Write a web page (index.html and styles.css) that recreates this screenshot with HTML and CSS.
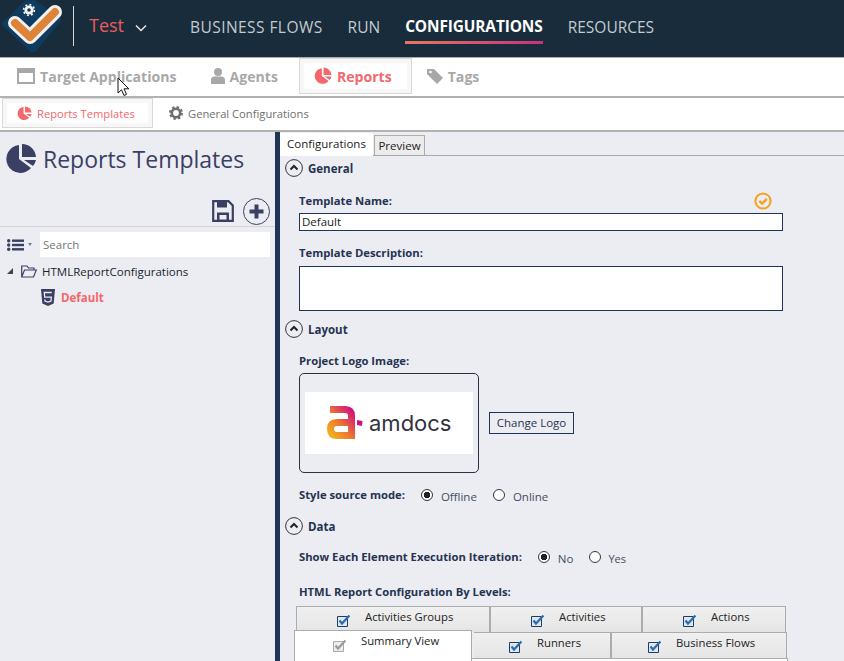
FILE: index.html
```html
<!DOCTYPE html>
<html>
<head lang="en">
	<meta charset="UTF-8">
	<title>Reports Templates</title>
	<link rel="stylesheet" href="styles.css">
</head>
<body>

<header class="topbar">
	<svg class="logo" viewBox="0 0 60 52">
		<path d="M1 24 L28 -2 L58 20 L31 52 Z" fill="#0f3c5e" stroke="#0f3c5e" stroke-width="3" stroke-linejoin="round"/>
		<path d="M13 23 L28 37 L53 12" fill="none" stroke="#f1f1f1" stroke-width="14" stroke-linecap="round" stroke-linejoin="round"/>
		<path d="M13 23 L28 37 L53 12" fill="none" stroke="#de8439" stroke-width="8" stroke-linecap="round" stroke-linejoin="round"/>
		<circle cx="27" cy="10" r="4.600" fill="#f4f4f4"/>
		<circle cx="27" cy="10" r="5.400" fill="none" stroke="#f4f4f4" stroke-width="1.600" stroke-dasharray="2 2.200"/>
		<circle cx="27" cy="10" r="1.800" fill="#0f3c5e"/>
	</svg>
	<div class="sep"></div>
	<div class="solution">Test</div>
	<svg class="chevron" viewBox="0 0 12 8"><path d="M1 1.500 L6 6.500 L11 1.500" fill="none" stroke="#e8e8e8" stroke-width="1.500"/></svg>
	<nav class="nav">
		<a class="wide">BUSINESS FLOWS</a>
		<a>RUN</a>
		<a class="on">CONFIGURATIONS</a>
		<a>RESOURCES</a>
	</nav>
</header>

<div class="tabs1">
	<div class="t1 t-apps">
		<svg class="i18" viewBox="0 0 18 16"><path d="M1 1 H17 V15 H1 Z" fill="none" stroke="#a8a8a8" stroke-width="2"/><path d="M1 1 H17 V5 H1 Z" fill="#a8a8a8"/></svg>
		Target Applications
	</div>
	<div class="t1 t-agents">
		<svg class="i14" viewBox="0 0 14 16"><circle cx="7" cy="4" r="4" fill="#a8a8a8"/><path d="M0 16 V12 Q0 8.500 4 8.500 H10 Q14 8.500 14 12 V16 Z" fill="#a8a8a8"/></svg>
		Agents
	</div>
	<div class="t1 t-reports">
		<svg class="i18" viewBox="0 0 32 32"><g fill="#f4676c"><path d="M14 2 A14 14 0 1 0 26 25 L14 16 Z"/><path d="M17 1 A14 14 0 0 1 31 14 L17 14 Z"/><path d="M19 17 L31 17 A14 14 0 0 1 28 23 Z"/></g></svg>
		Reports
	</div>
	<div class="t1 t-tags">
		<svg class="i16" viewBox="0 0 16 16"><path d="M0 1 H7 L16 10 L10 16 L0 6 Z" fill="#a8a8a8"/><circle cx="3.500" cy="4" r="1.300" fill="#fff"/></svg>
		Tags
	</div>
</div>

<div class="tabs2">
	<div class="t2 t2-on">
		<svg class="i15" viewBox="0 0 32 32"><g fill="#f4676c"><path d="M14 2 A14 14 0 1 0 26 25 L14 16 Z"/><path d="M17 1 A14 14 0 0 1 31 14 L17 14 Z"/><path d="M19 17 L31 17 A14 14 0 0 1 28 23 Z"/></g></svg>
		Reports Templates
	</div>
	<div class="t2 t2-off">
		<svg class="i13" viewBox="0 0 14 14"><circle cx="7" cy="7" r="4.200" fill="none" stroke="#6f6f6f" stroke-width="2.600"/><circle cx="7" cy="7" r="6" fill="none" stroke="#6f6f6f" stroke-width="2" stroke-dasharray="2.400 2.300"/></svg>
		General Configurations
	</div>
</div>

<div class="body">
	<aside class="side">
		<div class="side-title">
			<svg class="title-icon" viewBox="0 0 32 32"><g fill="#3b3f64"><path d="M14 2 A14 14 0 1 0 26 25 L14 16 Z"/><path d="M17 1 A14 14 0 0 1 31 14 L17 14 Z"/><path d="M19 17 L31 17 A14 14 0 0 1 28 23 Z"/></g></svg>
			<span>Reports Templates</span>
		</div>
		<div class="side-tools">
			<svg class="save" viewBox="0 0 22 22"><path d="M1.200 1.200 H16.500 L20.800 5.500 V20.800 H1.200 Z" fill="none" stroke="#3b3f64" stroke-width="2.200"/><path d="M5 1 H15 V7.500 H5 Z M5 12.500 H17 V21 H5 Z" fill="#3b3f64"/><path d="M7.500 15 H14.500 V19.500 H7.500 Z" fill="#ecedf3"/></svg>
			<svg class="plus" viewBox="0 0 27 27"><circle cx="13.500" cy="13.500" r="13" fill="none" stroke="#3b3f64" stroke-width="1"/><path d="M13.500 6.500 V20.500 M6.500 13.500 H20.500" stroke="#3b3f64" stroke-width="4"/></svg>
		</div>
		<div class="side-search">
			<svg class="list-icon" viewBox="0 0 17 12"><g fill="#3b3f64"><circle cx="1.700" cy="1.700" r="1.700"/><circle cx="1.700" cy="6" r="1.700"/><circle cx="1.700" cy="10.300" r="1.700"/><rect x="5" y="0.500" width="12" height="2.400"/><rect x="5" y="4.800" width="12" height="2.400"/><rect x="5" y="9.100" width="12" height="2.400"/></g></svg>
			<span class="caret"></span>
			<div class="search">Search</div>
		</div>
		<div class="tree-row">
			<span class="tri"></span>
			<svg class="folder" viewBox="0 0 16 13"><path d="M0.700 12 V1 H6 L7.500 3 H13 V5 M0.700 12 L3.500 5 H15.300 L12.500 12 Z" fill="none" stroke="#3b3f64" stroke-width="1.200"/></svg>
			HTMLReportConfigurations
		</div>
		<div class="tree-leaf">
			<svg class="html5" viewBox="0 0 14 17"><path d="M0 0 H14 L12.700 14.600 L7 17 L1.300 14.600 Z" fill="#3b3f64"/><path d="M10.800 3.500 H3.300 L3.700 8.200 H10.300 L10 12 L7 13 L4 12 L3.900 10.500" fill="none" stroke="#ecedf3" stroke-width="1.300"/></svg>
			<span>Default</span>
		</div>
	</aside>

	<main class="main">
		<div class="cfg-tabs">
			<div class="cfg-tab on">Configurations</div>
			<div class="cfg-tab">Preview</div>
		</div>

		<div class="sec sec-general">
			<svg class="exp" viewBox="0 0 18 18"><circle cx="9" cy="9" r="8.400" fill="none" stroke="#33343d" stroke-width="1"/><path d="M5.500 10.500 L9 7 L12.500 10.500" fill="none" stroke="#22232b" stroke-width="2"/></svg>
			General
		</div>
		<div class="form">
			<div class="name-head">
				<label class="lbl">Template Name:</label>
				<svg class="ok" viewBox="0 0 18 18"><circle cx="9" cy="9" r="7.600" fill="none" stroke="#f5a11c" stroke-width="2"/><path d="M5.300 8.800 L8.200 11.600 L12.800 6.800" fill="none" stroke="#f5a11c" stroke-width="2.400"/></svg>
			</div>
			<div class="input">Default</div>
			<label class="lbl lbl-desc">Template Description:</label>
			<div class="textarea"></div>
		</div>

		<div class="sec sec-layout">
			<svg class="exp" viewBox="0 0 18 18"><circle cx="9" cy="9" r="8.400" fill="none" stroke="#33343d" stroke-width="1"/><path d="M5.500 10.500 L9 7 L12.500 10.500" fill="none" stroke="#22232b" stroke-width="2"/></svg>
			Layout
		</div>
		<div class="form">
			<label class="lbl lbl-logo">Project Logo Image:</label>
			<div class="logo-row">
				<div class="logo-box">
					<div class="logo-img">
						<svg class="a-mark" viewBox="0 0 36 34">
							<defs>
								<linearGradient id="amd" x1="0" y1="1" x2="1" y2="0">
									<stop offset="0" stop-color="#f2b01e"/>
									<stop offset="0.450" stop-color="#ec7a30"/>
									<stop offset="1" stop-color="#d1127f"/>
								</linearGradient>
							</defs>
							<path d="M3 3.500 H18 Q24.500 3.500 24.500 10 V29.500 H10 Q3.500 29.500 3.500 23 Q3.500 16.500 10 16.500 H22" fill="none" stroke="url(#amd)" stroke-width="7"/>
							<path d="M30 14 L35.500 15 L35 20 L30 19 Z" fill="#d1127f"/>
						</svg>
						<span class="amdocs">amdocs</span>
					</div>
				</div>
				<div class="change-btn">Change Logo</div>
			</div>
			<div class="radio-row row-style">
				<label class="lbl">Style source mode:</label>
				<span class="radio sel"></span><span class="radio-txt">Offline</span>
				<span class="radio"></span><span class="radio-txt">Online</span>
			</div>
		</div>

		<div class="sec sec-data">
			<svg class="exp" viewBox="0 0 18 18"><circle cx="9" cy="9" r="8.400" fill="none" stroke="#33343d" stroke-width="1"/><path d="M5.500 10.500 L9 7 L12.500 10.500" fill="none" stroke="#22232b" stroke-width="2"/></svg>
			Data
		</div>
		<div class="form">
			<div class="radio-row row-iter">
				<label class="lbl">Show Each Element Execution Iteration:</label>
				<span class="radio sel"></span><span class="radio-txt">No</span>
				<span class="radio"></span><span class="radio-txt">Yes</span>
			</div>
			<label class="lbl lbl-levels">HTML Report Configuration By Levels:</label>
		</div>

		<div class="levels">
			<div class="lv-row lv-row1">
				<div class="lv lv-groups"><svg class="chk" viewBox="0 0 13 13"><use href="#chk-blue"/></svg><span>Activities Groups</span></div>
				<div class="lv lv-act"><svg class="chk" viewBox="0 0 13 13"><use href="#chk-blue"/></svg><span>Activities</span></div>
				<div class="lv lv-actions"><svg class="chk" viewBox="0 0 13 13"><use href="#chk-blue"/></svg><span>Actions</span></div>
			</div>
			<div class="lv-row lv-row2">
				<div class="lv lv-summary">
					<svg class="chk" viewBox="0 0 13 13"><path d="M0.500 2.500 H10.500 V12.500 H0.500 Z" fill="#ededed" stroke="#a9a9a9"/><path d="M2.500 6.500 L5 9.500 L12.500 1.500" fill="none" stroke="#9b9b9b" stroke-width="2.200"/></svg>
					<span>Summary View</span>
				</div>
				<div class="lv lv-runners"><svg class="chk" viewBox="0 0 13 13"><use href="#chk-blue"/></svg><span>Runners</span></div>
				<div class="lv lv-flows"><svg class="chk" viewBox="0 0 13 13"><use href="#chk-blue"/></svg><span>Business Flows</span></div>
			</div>
			<div class="lv-panel"></div>
		</div>
		<svg class="defs" width="0" height="0"><defs><g id="chk-blue"><path d="M0.500 2.500 H10.500 V12.500 H0.500 Z" fill="#dfe6ee" stroke="#1d3f66"/><path d="M2.500 6.500 L5 9.500 L12.500 1.500" fill="none" stroke="#2a6cae" stroke-width="2.200"/></g></defs></svg>
	</main>
</div>

<svg class="cursor" viewBox="0 0 13 20"><path d="M1 1 V16 L4.500 12.800 L7 18.500 L9.500 17.400 L7 11.800 L11.800 11.800 Z" fill="#fff" stroke="#111" stroke-width="1"/></svg>

</body>
</html>
```

FILE: styles.css
```css
* {
	box-sizing: border-box;
	margin: 0;
	padding: 0;
}

html, body {
	width: 844px;
	height: 661px;
	overflow: hidden;
}

body {
	position: relative;
	font-family: "Open Sans", "Noto Sans", sans-serif;
	font-size: 12px;
	background: #ecedf3;
	color: #222;
}

svg {
	display: block;
	flex: none;
}

/* top bar */
.topbar {
	display: flex;
	align-items: flex-start;
	height: 57px;
	background: #182c3b;
}

.logo {
	width: 60px;
	height: 52px;
	margin-left: 2px;
}

.sep {
	width: 1px;
	height: 40px;
	margin: 6px 0 0 11px;
	background: #d7d7d7;
}

.solution {
	width: 46px;
	margin: 10px 0 0 15px;
	font-size: 18px;
	line-height: 30px;
	color: #ea5c5f;
}

.chevron {
	width: 12px;
	height: 8px;
	margin: 24px 0 0 0;
}

.nav {
	display: flex;
	gap: 25px;
	margin-left: 43px;
}

.nav a {
	height: 44px;
	padding-top: 17px;
	font-size: 15.500px;
	line-height: 20px;
	white-space: nowrap;
	color: #c3cbd0;
}

.nav a.wide {
	letter-spacing: 0.440px;
}

.nav a.on {
	font-size: 15.400px;
	letter-spacing: -0.100px;
	font-weight: 700;
	color: #fff;
	border-bottom: 3px solid;
	border-image: linear-gradient(90deg, #e8785a, #c5307f) 1;
}

/* first tab row */
.tabs1 {
	position: relative;
	height: 41px;
	padding: 0 0 2px 17px;
	display: flex;
	align-items: center;
	background: #fff;
	border-top: 1px solid #a9adb0;
	border-bottom: 2px solid #b2b2b2;
	font-size: 14.100px;
	font-weight: 700;
	color: #a8a8a8;
}

.t1 {
	display: flex;
	align-items: center;
	gap: 5px;
	white-space: nowrap;
}

.t-agents {
	margin-left: 35px;
	gap: 4px;
}

.t-reports {
	height: 36px;
	margin-left: 21px;
	padding: 0 19px 0 14px;
	color: #f4676c;
	border: 1px solid #d9d9d9;
	box-shadow: inset 0 0 0 4px #f7f7f7;
}

.t-tags {
	margin-left: 15px;
}

.i18 { width: 18px; height: 16px; }
.i14 { width: 14px; height: 16px; }
.i16 { width: 16px; height: 16px; }
.i15 { width: 15px; height: 15px; }
.i13 { width: 14px; height: 14px; }

.t-reports .i18 { height: 18px; }

/* second tab row */
.tabs2 {
	height: 34px;
	padding: 0 0 2px 2px;
	display: flex;
	align-items: center;
	background: #fff;
	border-bottom: 2px solid #b2b2b2;
	color: #6f6f6f;
}

.t2 {
	display: flex;
	align-items: center;
	gap: 5px;
	white-space: nowrap;
	font-size: 11.200px;
}

.t2-on {
	width: 151px;
	height: 30px;
	padding-left: 14px;
	color: #f4676c;
	border: 1px solid #d9d9d9;
	box-shadow: inset 0 0 0 4px #f7f7f7;
}

.t2-off {
	margin-left: 16px;
}

/* body */
.body {
	display: flex;
	height: 530px;
}

.side {
	width: 280px;
	flex: none;
	border-right: 5px solid #1f3557;
}

.side-title {
	display: flex;
	align-items: center;
	gap: 6px;
	padding: 6px 0 0 5px;
	height: 48px;
	font-size: 23px;
	line-height: 32px;
	color: #3b3f64;
}

.title-icon {
	width: 32px;
	height: 32px;
}

.side-tools {
	display: flex;
	align-items: center;
	justify-content: flex-end;
	gap: 9px;
	height: 47px;
	padding: 17px 5px 1px 0;
	border-bottom: 1px solid #d5d5d8;
}

.save {
	width: 22px;
	height: 22px;
}

.plus {
	width: 27px;
	height: 27px;
}

.side-search {
	display: flex;
	align-items: center;
	height: 25px;
	margin-top: 5px;
	padding-left: 7px;
}

.list-icon {
	width: 17px;
	height: 12px;
}

.caret {
	margin: 0 8px 0 4px;
	border: 2px solid transparent;
	border-top: 3px solid #6f7f99;
	border-bottom: 0;
}

.search {
	width: 230px;
	height: 25px;
	padding-left: 3px;
	line-height: 25px;
	font-size: 11.500px;
	color: #777;
	background: #fff;
}

.tree-row {
	display: flex;
	align-items: center;
	height: 20px;
	margin-top: 4px;
	padding-left: 7px;
	white-space: nowrap;
	font-size: 11.500px;
	color: #1a1f2f;
}

.tri {
	width: 0;
	height: 0;
	margin-right: 8px;
	border-left: 6px solid transparent;
	border-bottom: 6px solid #444;
}

.folder {
	width: 16px;
	height: 13px;
	margin-right: 5px;
}

.tree-leaf {
	display: flex;
	align-items: center;
	gap: 6px;
	height: 20px;
	margin-top: 6px;
	padding-left: 41px;
	font-weight: 700;
	font-size: 11.500px;
	color: #f4676c;
}

.html5 {
	width: 14px;
	height: 17px;
}

/* right side */
.main {
	position: relative;
	flex: 1;
	min-width: 0;
}

.cfg-tabs {
	display: flex;
	align-items: flex-end;
	height: 24px;
	padding-top: 1px;
	border-bottom: 1px solid #a9a9a9;
}

.cfg-tab {
	width: 51px;
	height: 20px;
	margin-left: 1px;
	line-height: 19px;
	text-align: center;
	font-size: 11.500px;
	background: #ececec;
	border: 1px solid #acacac;
	border-bottom: 0;
}

.cfg-tab.on {
	width: 93px;
	height: 23px;
	margin: 0 0 -1px;
	background: #fff;
	border-color: #fff;
}

.sec {
	display: flex;
	align-items: center;
	gap: 5px;
	height: 18px;
	padding-left: 5px;
	font-weight: 700;
	font-size: 11.500px;
	color: #263350;
}

.sec-general { margin-top: 3px; }
.sec-layout { margin-top: 9px; }
.sec-data { margin-top: 13px; }

.exp {
	width: 18px;
	height: 18px;
}

.form {
	width: 503px;
	padding-left: 19px;
}

.lbl {
	display: block;
	font-weight: 700;
	font-size: 11.250px;
	line-height: 16px;
	white-space: nowrap;
	color: #263350;
}

.name-head {
	display: flex;
	justify-content: space-between;
	align-items: flex-start;
	height: 36px;
	padding: 16px 11px 0 0;
}

.ok {
	width: 18px;
	height: 18px;
	margin-top: -1px;
}

.input {
	height: 18px;
	padding-left: 2px;
	line-height: 16px;
	font-size: 11.500px;
	background: #fff;
	border: 1px solid #1f3557;
}

.lbl-desc {
	margin-top: 14px;
}

.textarea {
	height: 45px;
	margin-top: 5px;
	background: #fff;
	border: 1px solid #1f3557;
}

.lbl-logo {
	margin-top: 15px;
}

.logo-row {
	display: flex;
	align-items: center;
	gap: 10px;
	margin-top: 4px;
}

.logo-box {
	width: 180px;
	height: 100px;
	padding: 18px 5px 0;
	border: 1px solid #2d3142;
	border-radius: 5px;
}

.logo-img {
	display: flex;
	align-items: center;
	gap: 6px;
	height: 62px;
	padding-left: 22px;
	background: #fff;
}

.a-mark {
	width: 36px;
	height: 34px;
}

.amdocs {
	font-family: "Inter", sans-serif;
	font-size: 22px;
	color: #33323f;
}

.change-btn {
	width: 85px;
	height: 22px;
	line-height: 20px;
	text-align: center;
	font-size: 11.500px;
	color: #263350;
	border: 1px solid #1f3557;
}

.radio-row {
	display: flex;
	align-items: center;
	height: 18px;
}

.row-style { margin-top: 13px; }

.radio {
	width: 12px;
	height: 12px;
	border: 1px solid #33343d;
	border-radius: 50%;
	background: #fff;
	flex: none;
}

.radio.sel {
	background: radial-gradient(circle, #222 0 3px, #fff 3.500px);
}

.radio-txt {
	margin: 2px 16px 0 8px;
	font-size: 11.500px;
	color: #444c5c;
}

.row-style .radio.sel { margin-left: 16px; }
.row-iter .radio.sel { margin-left: 16px; }

.row-iter {
	margin-top: 13px;
}

.row-iter .radio-txt:last-child {
	margin-left: 7px;
	font-size: 11px;
}

.lbl-levels {
	margin-top: 18px;
}

/* levels tab strip */
.levels {
	position: relative;
	margin: 6px 0 0 16px;
	width: 491px;
	font-size: 11.300px;
	color: #222;
}

.lv-row {
	display: flex;
	height: 26px;
}

.lv {
	display: flex;
	align-items: flex-start;
	height: 26px;
	background: linear-gradient(#f0f0f0, #e5e5e5);
	border: 1px solid #acacac;
	border-bottom: 0;
	white-space: nowrap;
}

.lv span {
	margin-top: 1px;
	line-height: 18px;
}

.chk {
	width: 13px;
	height: 13px;
	margin-top: 7px;
}

.lv-groups { width: 194px; padding-left: 40px; }
.lv-groups span { margin-left: 15px; }
.lv-act { width: 152px; padding-left: 40px; }
.lv-act span { margin-left: 15px; }
.lv-actions { width: 144px; padding-left: 40px; }
.lv-actions span { margin-left: 15px; }

.lv-row2 {
	padding-left: 178px;
}

.lv-row2 .lv span {
	margin-top: 1px;
}

.lv-runners { width: 137px; padding-left: 35px; border-left: 0; }
.lv-runners span { margin-left: 15px; }
.lv-flows { width: 176px; padding-left: 36px; }
.lv-flows span { margin-left: 15px; }

.lv-summary {
	position: absolute;
	left: -2px;
	top: 24px;
	width: 178px;
	height: 34px;
	padding-left: 38px;
	background: #fff;
	border-bottom: 0;
	z-index: 1;
}

.lv-row2 .lv-summary span {
	margin: 1px 0 0 15px;
}

.lv-summary .chk {
	margin-top: 8px;
}

.lv-panel {
	height: 6px;
	width: 492px;
	background: #fff;
	border-top: 1px solid #acacac;
	border-right: 1px solid #acacac;
}

.defs {
	position: absolute;
}

.cursor {
	position: absolute;
	left: 117px;
	top: 77px;
	width: 13px;
	height: 20px;
}
```
